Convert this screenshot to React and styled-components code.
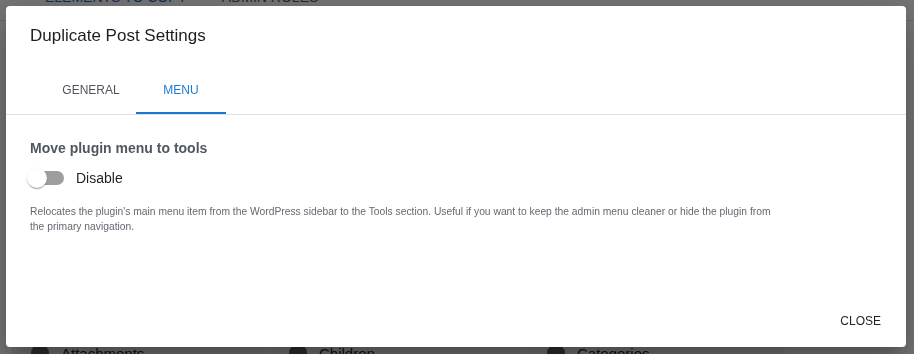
import React from "react";
import styled, { createGlobalStyle } from "styled-components";

const Global = createGlobalStyle`
  html, body { margin: 0; padding: 0; height: 354px; overflow: hidden; }
  body { font-family: "Liberation Sans", Arial, sans-serif; background: #ebebeb; }
  * { box-sizing: border-box; }
`;

/* ---------- background page ---------- */
const Page = styled.div`
  margin-top: -27px;
`;

const BgTabs = styled.div`
  display: flex;
  height: 48px;
  padding-left: 30px;
  border-bottom: 1px solid #d0d0d2;
`;

const BgTab = styled.div`
  display: flex;
  align-items: center;
  padding: 0 15px 0 15px;
  margin-right: 5px;
  font-size: 14px;
  font-weight: 500;
  text-transform: uppercase;
  color: ${(p) => (p.$active ? "#2a5fa8" : "#50575e")};
`;

const OptionGrid = styled.div`
  display: grid;
  grid-template-columns: repeat(3, 258px);
  grid-auto-rows: 44px;
  margin: 134px 0 0 11px;
  width: 774px;
`;

const OptionCell = styled.div`
  display: flex;
  align-items: center;
  gap: 12px;
  padding-left: 19px;
  background: #e2e2e4;
  border-left: 1px solid ${(p) => (p.$first ? "transparent" : "#ececee")};
  font-size: 15px;
  color: #1d2327;
`;

const BgKnob = styled.span`
  width: 18px;
  height: 18px;
  border-radius: 50%;
  background: #5a5a5a;
`;

/* ---------- dialog ---------- */
const Backdrop = styled.div`
  position: fixed;
  inset: 0;
  background: rgba(0, 0, 0, 0.5);
  display: flex;
  align-items: flex-start;
  padding: 6px 8px 0 6px;
`;

const Dialog = styled.div`
  width: 900px;
  height: 341px;
  background: #fff;
  border-radius: 4px;
  display: flex;
  flex-direction: column;
  box-shadow: 0 11px 15px -7px rgba(0, 0, 0, 0.2),
    0 24px 38px 3px rgba(0, 0, 0, 0.14), 0 9px 46px 8px rgba(0, 0, 0, 0.12);
`;

const Title = styled.h2`
  margin: 0;
  padding: 16px 24px;
  font-size: 17px;
  line-height: 28px;
  font-weight: 400;
  color: #1e1e1e;
`;

const TabBar = styled.div`
  display: flex;
  padding-left: 40px;
  border-bottom: 1px solid #e0e0e0;
`;

const Tab = styled.button`
  all: unset;
  box-sizing: border-box;
  width: 90px;
  height: 48px;
  display: flex;
  align-items: center;
  justify-content: center;
  padding-top: 1px;
  font-family: "Liberation Sans", Arial, sans-serif;
  font-size: 12px;
  text-transform: uppercase;
  color: ${(p) => (p.$active ? "#1b7bd6" : "#50555b")};
  border-bottom: 2px solid ${(p) => (p.$active ? "#1976d2" : "transparent")};
  cursor: pointer;
`;

const Content = styled.div`
  flex: 1 1 auto;
  padding: 23px 24px 0;
`;

const Heading = styled.div`
  font-size: 14px;
  line-height: 21px;
  font-weight: 700;
  color: #50575e;
`;

const ToggleLabel = styled.label`
  display: inline-flex;
  align-items: center;
  margin: 0 0 0 -12px;
  cursor: pointer;
`;

const SwitchRoot = styled.span`
  position: relative;
  display: inline-flex;
  width: 58px;
  height: 38px;
  padding: 12px;
  flex-shrink: 0;
`;

const Track = styled.span`
  width: 100%;
  height: 100%;
  border-radius: 7px;
  background: #000;
  opacity: 0.38;
`;

const Thumb = styled.span`
  position: absolute;
  top: 9px;
  left: 9px;
  width: 20px;
  height: 20px;
  border-radius: 50%;
  background: #fff;
  box-shadow: 0 2px 1px -1px rgba(0, 0, 0, 0.2), 0 1px 1px 0 rgba(0, 0, 0, 0.14),
    0 1px 3px 0 rgba(0, 0, 0, 0.12);
`;

const ToggleText = styled.span`
  font-size: 14px;
  color: #1d2327;
`;

const Description = styled.p`
  margin: 7px 0 0;
  max-width: 750px;
  font-size: 10.3px;
  line-height: 15px;
  color: #646970;
`;

const Actions = styled.div`
  display: flex;
  justify-content: flex-end;
  padding: 8px 17px 8px;
`;

const TextButton = styled.button`
  all: unset;
  padding: 6px 8px;
  font-family: "Liberation Sans", Arial, sans-serif;
  font-size: 12px;
  line-height: 24px;
  text-transform: uppercase;
  color: #1d2327;
  cursor: pointer;
`;

const options = [
  "Title", "Date", "Status",
  "Slug", "Excerpt", "Content",
  "Featured Image", "Template", "Format",
  "Author", "Password", "Menu order",
  "Attachments", "Children", "Categories",
];

export default function App() {
  return (
    <>
      <Global />
      <Page>
        <BgTabs>
          <BgTab $active>Elements to copy</BgTab>
          <BgTab>Admin roles</BgTab>
        </BgTabs>
        <OptionGrid>
          {options.map((o, i) => (
            <OptionCell key={o} $first={i % 3 === 0}>
              <BgKnob />
              {o}
            </OptionCell>
          ))}
        </OptionGrid>
      </Page>
      <Backdrop>
        <Dialog role="dialog">
          <Title>Duplicate Post Settings</Title>
          <TabBar>
            <Tab>General</Tab>
            <Tab $active>Menu</Tab>
          </TabBar>
          <Content>
            <Heading>Move plugin menu to tools</Heading>
            <ToggleLabel>
              <SwitchRoot>
                <Track />
                <Thumb />
              </SwitchRoot>
              <ToggleText>Disable</ToggleText>
            </ToggleLabel>
            <Description>
              Relocates the plugin's main menu item from the WordPress sidebar to
              the Tools section. Useful if you want to keep the admin menu cleaner
              or hide the plugin from the primary navigation.
            </Description>
          </Content>
          <Actions>
            <TextButton>Close</TextButton>
          </Actions>
        </Dialog>
      </Backdrop>
    </>
  );
}
